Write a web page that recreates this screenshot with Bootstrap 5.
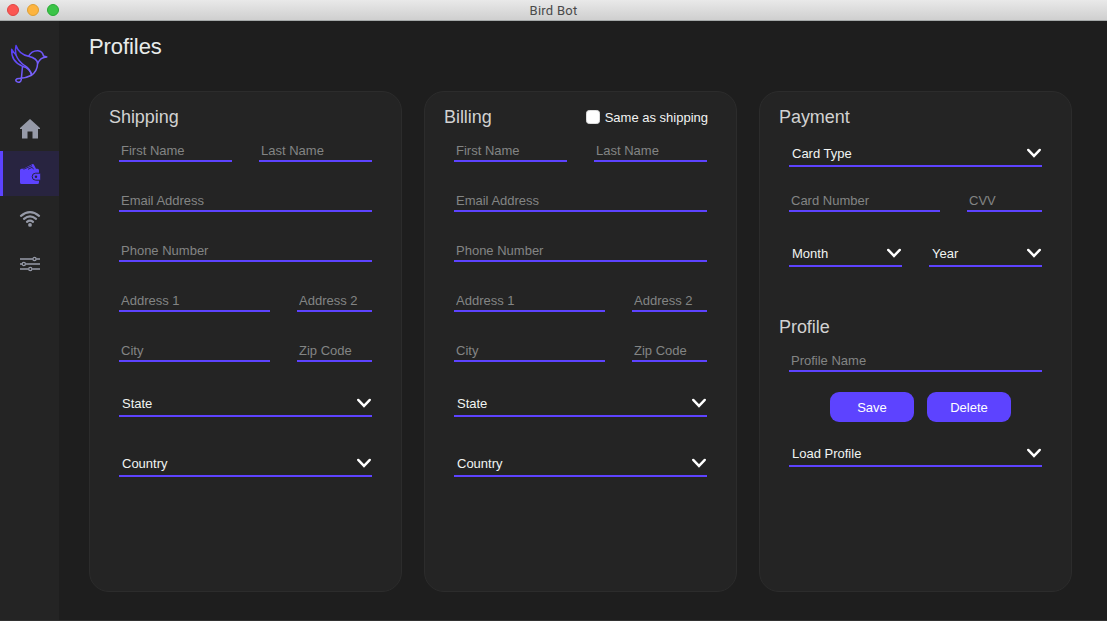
<!DOCTYPE html>
<html lang="en">
<head>
<meta charset="utf-8">
<meta name="viewport" content="width=device-width, initial-scale=1">
<title>Bird Bot</title>
<link href="https://cdn.jsdelivr.net/npm/bootstrap@5.3.0/dist/css/bootstrap.min.css" rel="stylesheet">
<style>
  body { background: #1e1e1e; color: #e9eceb; font: 13px/15px "Liberation Sans", Arial, sans-serif; height: 621px; border-bottom: 1px solid #323232; }
  .titlebar { height: 21px; background: linear-gradient(#e9e9e9, #cfcfcf); border-bottom: 1px solid #a5a9a9; font: 13px/21px Roboto, sans-serif; color: #4a4a4a; letter-spacing: .25px; }
  .lights { left: 7px; top: 4px; gap: 8px; }
  .light { width: 12px; height: 12px; border-radius: 50%; border: 1px solid; }
  .light-r { background: #fc5753; border-color: #df4744; }
  .light-y { background: #fdb440; border-color: #de9f34; }
  .light-g { background: #3cc448; border-color: #27aa35; }
  .sidebar { width: 59px; background: #242424; }
  .logo { height: 85px; padding-top: 23px; padding-left: 10px; }
  .side-item { height: 45px; color: #969aa8; border-left: 3px solid transparent; padding-left: 16px; }
  .side-item.active { color: #5d43ff; background: #282440; border-color: #5d43ff; }
  .page { padding: 12px 35px 28px 30px; }
  .page h1 { font-size: 22px; line-height: 28px; margin: 0 0 30px; font-weight: 400; letter-spacing: -.08px; }
  .panels { gap: 22px; }
  .panel { width: 313px; border: 1px solid #2c2c2c; border-radius: 20px; background: #242424; padding: 14px 29px 0; }
  .panel h2 { font-size: 18px; line-height: 22px; margin: 0 0 0 -10px; font-weight: 400; color: #d2d2d2; letter-spacing: -.05px; }
  .field-row { gap: 27px; margin-top: 28px; }
  .first-row { margin-top: 12px; }
  .field { height: 22px; min-width: 0; border: 0; border-bottom: 2px solid #5d43ff; background: none; color: #fff; padding: 3px 2px 2px; outline: 0; line-height: 15px; }
  .field::placeholder { color: #838584; opacity: 1; }
  .narrow { width: 75px; flex: none; }
  .picker { height: 29px; border: 0; border-bottom: 2px solid #5d43ff; background: none; color: #f1f4f2; padding: 4px 0 1px 3px; }
  .picker svg { margin-bottom: 1px; }
  .same { gap: 5px; color: #f3f3f3; margin-right: -1px; }
  .same input { width: 14px; height: 14px; margin: 0; background: #fff; border: 1px solid #ddd; border-radius: 3px; }
  .action { width: 84px; height: 30px; padding: 0; border: 0; border-radius: 9px; background: #5d43ff; color: #fff; font-size: 13px; line-height: 15px; }
</style>
</head>
<body class="d-flex flex-column overflow-hidden">
<svg class="d-none"><symbol id="chev" viewBox="0 0 16 10"><path d="M2.200 1.900l5.800 6 5.800-6" fill="none" stroke="#fff" stroke-width="2.400" stroke-linecap="round"/></symbol></svg>
<header class="titlebar position-relative text-center flex-shrink-0">
  <div class="lights position-absolute d-flex"><span class="light light-r"></span><span class="light light-y"></span><span class="light light-g"></span></div>
  Bird Bot
</header>
<div class="d-flex flex-grow-1">
  <nav class="sidebar flex-shrink-0">
    <div class="logo">
      <svg class="d-block" width="38" height="40" viewBox="0 0 38 40" fill="none" stroke="url(#wing)" stroke-width="1.500" stroke-linejoin="round" stroke-linecap="round">
        <defs><linearGradient id="wing" x1="0" y1="0" x2="38" y2="40" gradientUnits="userSpaceOnUse"><stop stop-color="#5138f5"/><stop offset="1" stop-color="#8c76ff"/></linearGradient></defs>
        <path d="M12.500 22.200C5.500 19.500 1.200 14 1.700 5.300c1.100 2 2.600 3.800 4.200 5.500C5.300 7.500 5.300 4.500 6 1.600C8 7.500 12 11 18.500 12.300C23.500 13.500 27.500 16 27.600 19.500C27.500 24.500 25 29 21 31.500C16.500 33.800 13.500 34.300 9.500 34.600C5.500 34.500 5 36.500 6.800 37.600C9 39 11 38 11.300 35.500L12.500 22.200C17 23.500 21 27 21.500 31.200"/>
        <path d="M5.900 10.800C7.500 15 10 18.500 14.500 21.500C18.500 24 21 27.500 21.500 31.200M18.500 12.300C20.500 8.500 24 6.500 28 6.700C31.500 7 33 9.500 33.500 12L36.800 12.900C32.500 13 29.500 15 27.600 19.500"/>
      </svg>
    </div>
    <a class="side-item d-flex align-items-center" href="#"><svg width="22" height="22" viewBox="0 0 22 22" fill="currentColor"><path d="M11 1 21 10V11h-2v9.500h-5.500v-7h-5v7H3V11H1v-1z"/></svg></a>
    <a class="side-item active d-flex align-items-center" href="#"><svg width="22" height="22" viewBox="0 0 22 22" fill="currentColor"><path d="M2.500 5.700H4.500L13.200 1.200Q14.200.7 14.800 1.600L17 5.700H18.500Q20 5.700 20 7.200V19.500Q20 21 18.500 21H2.500Q1 21 1 19.500V7.200Q1 5.700 2.500 5.700z"/><path d="M4.500 6.300 13 2.600M9 6.300l4.200-2 1.300 2" fill="none" stroke="#282440" stroke-width=".9"/><path d="M21.200 10.200h-4.500a3.500 3.500 0 0 0 0 7h4.500" fill="#5d43ff" stroke="#282440"/><circle cx="17" cy="13.700" r="1.200" fill="#282440"/></svg></a>
    <a class="side-item d-flex align-items-center" href="#"><svg width="22" height="22" viewBox="0 0 22 22" fill="none" stroke="currentColor" stroke-width="2.200" stroke-linecap="round"><path d="M2 7.800Q11 .4 20 7.800M5 10.900Q11 5.800 17 10.900M8 13.800Q11 11.400 14 13.800"/><circle cx="11" cy="16.900" r="1.900" fill="currentColor" stroke="none"/></svg></a>
    <a class="side-item d-flex align-items-center" href="#"><svg width="22" height="22" viewBox="0 0 22 22" fill="none" stroke="currentColor" stroke-width="1.300"><path d="M1 6h12.800M17.200 6H21M1 11h2M6.800 11H21M1 16h8.500M13.200 16H21"/><circle cx="15.500" cy="6" r="1.600"/><circle cx="4.800" cy="11" r="1.600"/><circle cx="11.300" cy="16" r="1.600"/></svg></a>
  </nav>
  <main class="page flex-grow-1 d-flex flex-column">
    <h1>Profiles</h1>
    <div class="panels d-flex flex-grow-1">
      <section class="panel">
        <h2>Shipping</h2>
        <div class="field-row first-row d-flex"><input class="field w-50" placeholder="First Name"><input class="field w-50" placeholder="Last Name"></div>
        <div class="field-row d-flex"><input class="field w-100" placeholder="Email Address"></div>
        <div class="field-row d-flex"><input class="field w-100" placeholder="Phone Number"></div>
        <div class="field-row d-flex"><input class="field flex-grow-1" placeholder="Address 1"><input class="field narrow" placeholder="Address 2"></div>
        <div class="field-row d-flex"><input class="field flex-grow-1" placeholder="City"><input class="field narrow" placeholder="Zip Code"></div>
        <button class="picker w-100 d-flex align-items-center justify-content-between" style="margin-top:26px">State<svg width="16" height="10"><use href="#chev"/></svg></button>
        <button class="picker w-100 d-flex align-items-center justify-content-between" style="margin-top:31px">Country<svg width="16" height="10"><use href="#chev"/></svg></button>
      </section>
      <section class="panel">
        <div class="d-flex justify-content-between align-items-center"><h2>Billing</h2><label class="same d-flex align-items-center"><input class="form-check-input" type="checkbox">Same as shipping</label></div>
        <div class="field-row first-row d-flex"><input class="field w-50" placeholder="First Name"><input class="field w-50" placeholder="Last Name"></div>
        <div class="field-row d-flex"><input class="field w-100" placeholder="Email Address"></div>
        <div class="field-row d-flex"><input class="field w-100" placeholder="Phone Number"></div>
        <div class="field-row d-flex"><input class="field flex-grow-1" placeholder="Address 1"><input class="field narrow" placeholder="Address 2"></div>
        <div class="field-row d-flex"><input class="field flex-grow-1" placeholder="City"><input class="field narrow" placeholder="Zip Code"></div>
        <button class="picker w-100 d-flex align-items-center justify-content-between" style="margin-top:26px">State<svg width="16" height="10"><use href="#chev"/></svg></button>
        <button class="picker w-100 d-flex align-items-center justify-content-between" style="margin-top:31px">Country<svg width="16" height="10"><use href="#chev"/></svg></button>
      </section>
      <section class="panel">
        <h2>Payment</h2>
        <button class="picker w-100 d-flex align-items-center justify-content-between" style="margin-top:10px">Card Type<svg width="16" height="10"><use href="#chev"/></svg></button>
        <div class="field-row d-flex" style="margin-top:23px"><input class="field flex-grow-1" placeholder="Card Number"><input class="field narrow" placeholder="CVV"></div>
        <div class="field-row d-flex" style="margin-top:26px">
          <button class="picker w-50 d-flex align-items-center justify-content-between">Month<svg width="16" height="10"><use href="#chev"/></svg></button>
          <button class="picker w-50 d-flex align-items-center justify-content-between">Year<svg width="16" height="10"><use href="#chev"/></svg></button>
        </div>
        <h2 style="margin-top:49px">Profile</h2>
        <div class="field-row first-row d-flex"><input class="field w-100" placeholder="Profile Name"></div>
        <div class="d-flex justify-content-center" style="gap:13px;margin-top:20px;margin-right:-10px"><button class="action btn">Save</button><button class="action btn">Delete</button></div>
        <button class="picker w-100 d-flex align-items-center justify-content-between" style="margin-top:16px">Load Profile<svg width="16" height="10"><use href="#chev"/></svg></button>
      </section>
    </div>
  </main>
</div>
<script src="https://cdn.jsdelivr.net/npm/bootstrap@5.3.0/dist/js/bootstrap.bundle.min.js"></script>
</body>
</html>
